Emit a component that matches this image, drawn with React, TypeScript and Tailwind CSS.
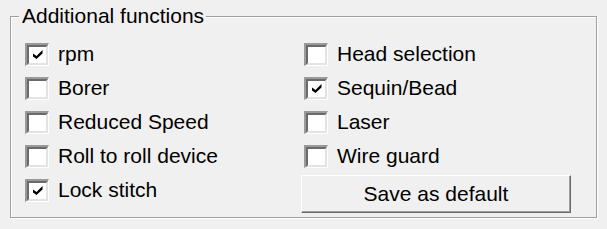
import React from 'react';

const font = { fontFamily: '"Liberation Sans", Arial, sans-serif' };

const left = [
  { label: 'rpm', checked: true },
  { label: 'Borer', checked: false },
  { label: 'Reduced Speed', checked: false },
  { label: 'Roll to roll device', checked: false },
  { label: 'Lock stitch', checked: true },
];

const right = [
  { label: 'Head selection', checked: false },
  { label: 'Sequin/Bead', checked: true },
  { label: 'Laser', checked: false },
  { label: 'Wire guard', checked: false },
];

function Box({ checked }: { checked: boolean }) {
  return (
    <span className="flex h-[23px] w-[24px] shrink-0 border-t-2 border-l-2 border-r border-b border-t-[#9a9a9a] border-l-[#9a9a9a] border-r-white border-b-white">
      <span className="flex flex-1 items-center justify-center bg-white border-t-2 border-l-2 border-r-2 border-b-2 border-t-[#6a6a6a] border-l-[#6a6a6a] border-r-[#e3e3e3] border-b-[#e3e3e3]">
        {checked && (
          <svg width="10" height="9" viewBox="0 0 10 9">
            <polygon points="0,3.5 3.5,6 9.5,0 9.5,3.5 3.5,9 0,6.5" fill="#000" />
          </svg>
        )}
      </span>
    </span>
  );
}

function Row({ label, checked }: { label: string; checked: boolean }) {
  return (
    <label className="flex h-[34px] items-center gap-[9px] text-[21px] text-black">
      <Box checked={checked} />
      <span>{label}</span>
    </label>
  );
}

export default function App() {
  return (
    <div className="h-[229px] w-[607px] overflow-hidden bg-[#f0f0f0] pt-[4px] pl-[10px]" style={font}>
      <fieldset className="m-0 box-border h-[214px] w-[587px] border border-[#a0a0a0] p-0 shadow-[inset_1px_1px_0_#fff,1px_1px_0_#fff]">
        <legend className="ml-[8px] bg-[#f0f0f0] pl-[3px] pr-[2px] text-[21px] leading-[24px] text-black">
          Additional functions
        </legend>
        <div className="flex pt-[9px] pl-[14px]">
          <div className="flex w-[276px] flex-col">
            {left.map((r) => (
              <Row key={r.label} {...r} />
            ))}
          </div>
          <div className="flex flex-col">
            <div className="flex flex-col pl-[3px]">
              {right.map((r) => (
                <Row key={r.label} {...r} />
              ))}
            </div>
            <button className="mt-[2px] h-[38px] w-[270px] border border-t-white border-l-white border-r-[#696969] border-b-[#696969] bg-[#f0f0f0] text-[21px] text-black shadow-[inset_-1px_-1px_0_#a0a0a0]">
              Save as default
            </button>
          </div>
        </div>
      </fieldset>
    </div>
  );
}
